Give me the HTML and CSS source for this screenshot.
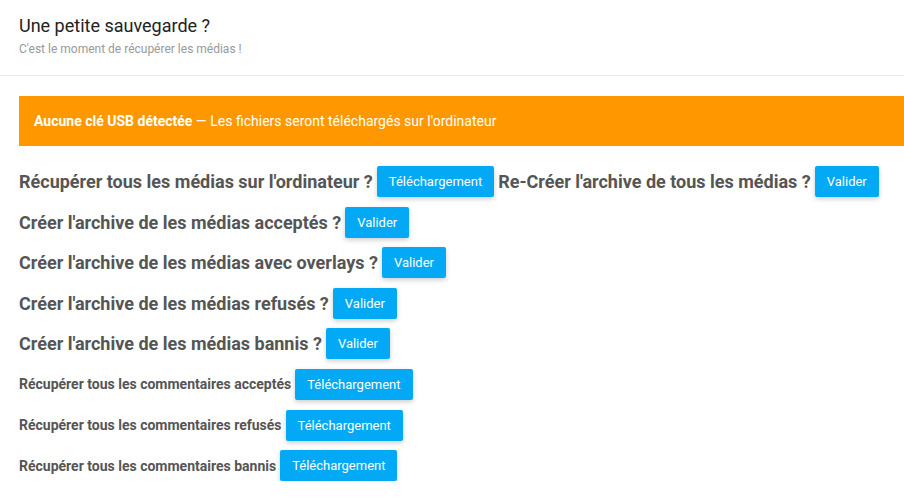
FILE: index.html
```html
<!DOCTYPE html>
<html lang="fr">
<head>
    <meta charset="UTF-8">
    <meta name="viewport" content="width=device-width, initial-scale=1.0">
    <title>Sauvegarde</title>
    <link rel="stylesheet" href="styles.css">
</head>
<body>
    <div class="page-header">
        <h1>Une petite sauvegarde ?</h1>
        <p class="subtitle">C'est le moment de récupérer les médias !</p>
    </div>

    <div class="content">
        <div class="alert">
            <strong>Aucune clé USB détectée</strong> — Les fichiers seront téléchargés sur l'ordinateur
        </div>

        <div class="actions">
            <div class="row">
                <h4>Récupérer tous les médias sur l'ordinateur ?</h4>
                <button class="btn">Téléchargement</button>
                <h4>Re-Créer l'archive de tous les médias ?</h4>
                <button class="btn">Valider</button>
            </div>
            <div class="row">
                <h4>Créer l'archive de les médias acceptés ?</h4>
                <button class="btn">Valider</button>
            </div>
            <div class="row">
                <h4>Créer l'archive de les médias avec overlays ?</h4>
                <button class="btn">Valider</button>
            </div>
            <div class="row">
                <h4>Créer l'archive de les médias refusés ?</h4>
                <button class="btn">Valider</button>
            </div>
            <div class="row">
                <h4>Créer l'archive de les médias bannis ?</h4>
                <button class="btn">Valider</button>
            </div>
            <div class="row">
                <h5>Récupérer tous les commentaires acceptés</h5>
                <button class="btn">Téléchargement</button>
            </div>
            <div class="row">
                <h5>Récupérer tous les commentaires refusés</h5>
                <button class="btn">Téléchargement</button>
            </div>
            <div class="row">
                <h5>Récupérer tous les commentaires bannis</h5>
                <button class="btn">Téléchargement</button>
            </div>
        </div>
    </div>
</body>
</html>
```

FILE: styles.css
```css
body {
    margin: 0;
    font-family: Roboto, "Liberation Sans", Arial, sans-serif;
    background: #fff;
    color: #555;
    overflow: hidden;
}
.page-header {
    padding: 14px 19px 0;
    height: 61px;
    border-bottom: 1px solid #eaeaea;
}
.page-header h1 {
    margin: 0;
    font-size: 18px;
    font-weight: 400;
    color: #222;
    line-height: 24px;
}
.subtitle {
    margin: 4px 0 0;
    font-size: 12px;
    color: #999;
}
.content {
    padding: 20px 0 0 19px;
}
.alert {
    background: #ff9800;
    color: #fff;
    font-size: 14px;
    height: 50px;
    line-height: 50px;
    padding: 0 15px;
}
.alert strong {
    font-weight: 700;
}
.actions {
    margin-top: 20px;
    display: flex;
    flex-direction: column;
    gap: 9.6px;
}
.row {
    display: flex;
    align-items: center;
    gap: 4px;
    height: 31px;
}
.row h4 {
    margin: 0;
    font-size: 18px;
    font-weight: 700;
    color: #555;
}
.row h5 {
    margin: 0;
    font-size: 14px;
    font-weight: 700;
    color: #555;
}
.btn {
    font-family: inherit;
    font-size: 13px;
    color: #fff;
    background: #03a9f4;
    border: none;
    border-radius: 2px;
    height: 31px;
    padding: 0 12px;
    box-shadow: 0 2px 5px rgba(0,0,0,0.2);
    cursor: pointer;
}
```
